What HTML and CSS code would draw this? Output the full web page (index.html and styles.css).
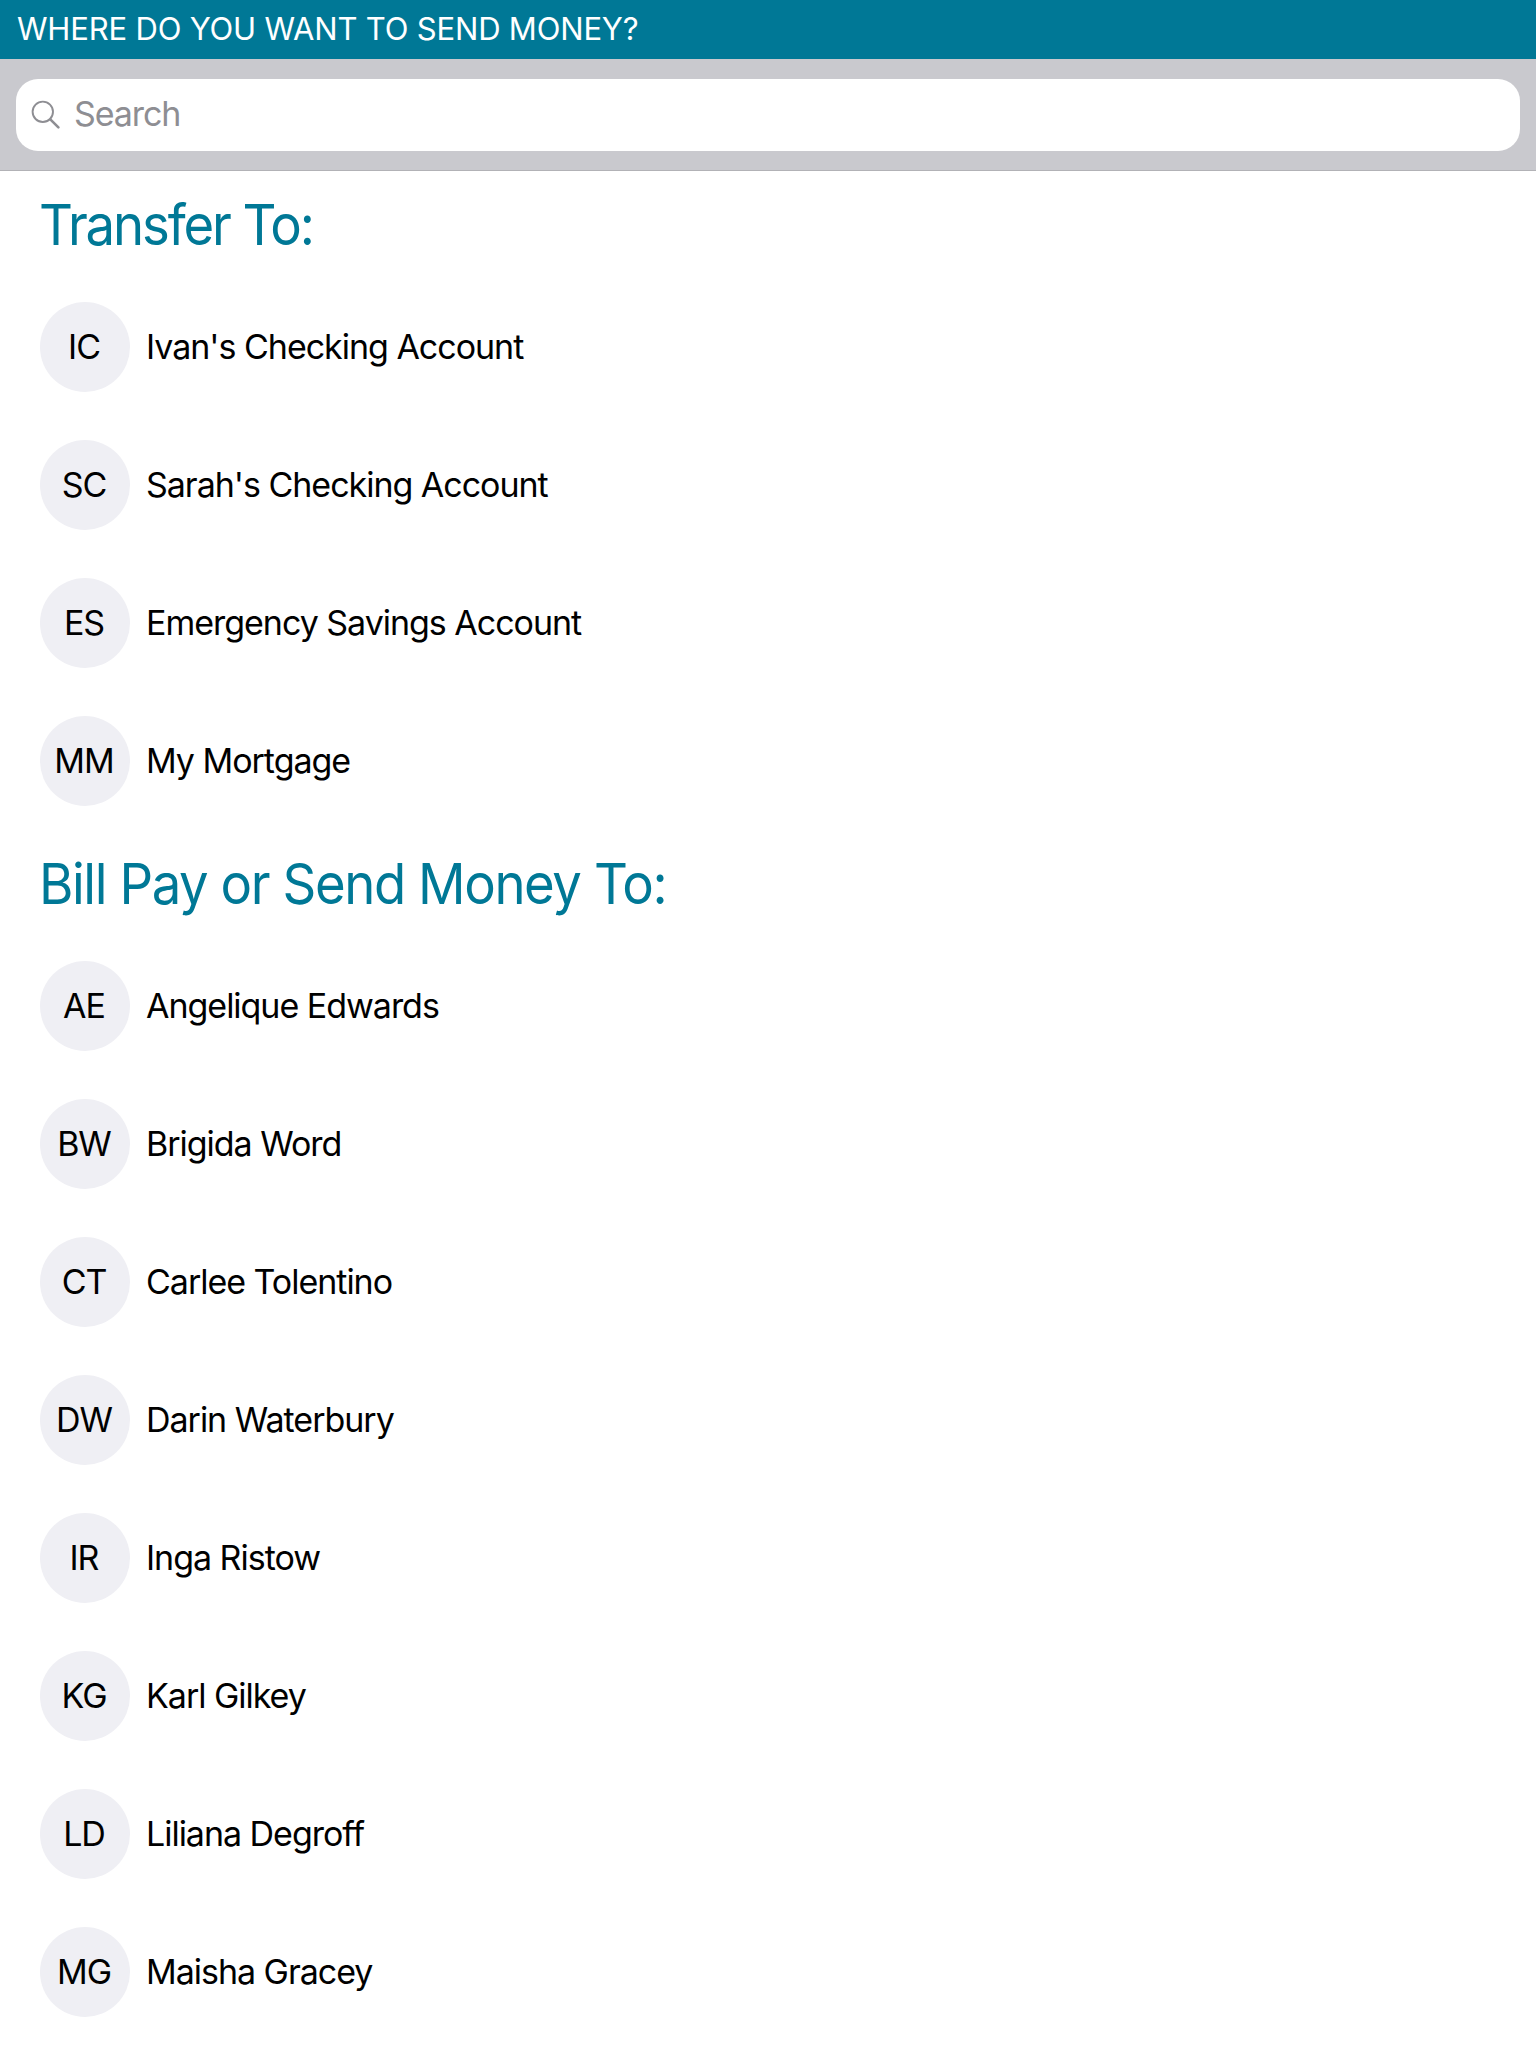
FILE: index.html
```html
<!DOCTYPE html>
<html lang="en">
<head>
<meta charset="utf-8">
<title>Send Money</title>
<link rel="stylesheet" href="styles.css">
</head>
<body>
<header class="title-bar">WHERE DO YOU WANT TO SEND MONEY?</header>
<div class="search-bar">
  <label class="search-field">
    <svg class="search-icon" viewBox="0 0 30 30" fill="none" stroke="#8e8e93"><circle cx="11.8" cy="11.8" r="10.2" stroke-width="1.9"/><path d="M19.3 19.3L27.4 27.4" stroke-width="2.6" stroke-linecap="round"/></svg>
    <span class="placeholder">Search</span>
  </label>
</div>
<main>
  <section>
    <h2 class="heading heading-transfer">Transfer To:</h2>
    <ul class="list">
      <li class="row"><span class="avatar">IC</span><span class="name">Ivan's Checking Account</span></li>
      <li class="row"><span class="avatar">SC</span><span class="name">Sarah's Checking Account</span></li>
      <li class="row"><span class="avatar">ES</span><span class="name">Emergency Savings Account</span></li>
      <li class="row"><span class="avatar">MM</span><span class="name">My Mortgage</span></li>
    </ul>
  </section>
  <section>
    <h2 class="heading">Bill Pay or Send Money To:</h2>
    <ul class="list">
      <li class="row"><span class="avatar">AE</span><span class="name">Angelique Edwards</span></li>
      <li class="row"><span class="avatar">BW</span><span class="name">Brigida Word</span></li>
      <li class="row"><span class="avatar">CT</span><span class="name">Carlee Tolentino</span></li>
      <li class="row"><span class="avatar">DW</span><span class="name">Darin Waterbury</span></li>
      <li class="row"><span class="avatar">IR</span><span class="name">Inga Ristow</span></li>
      <li class="row"><span class="avatar">KG</span><span class="name">Karl Gilkey</span></li>
      <li class="row"><span class="avatar">LD</span><span class="name">Liliana Degroff</span></li>
      <li class="row"><span class="avatar">MG</span><span class="name">Maisha Gracey</span></li>
    </ul>
  </section>
</main>
</body>
</html>
```
FILE: styles.css
```css
* { box-sizing: border-box; }
body {
  margin: 0;
  height: 2048px;
  overflow: hidden;
  background: #fff;
  color: #000;
  font-family: Inter, sans-serif;
  font-size: 34px;
  letter-spacing: -1.02px;
}
.title-bar {
  height: 59px;
  padding-left: 17px;
  background: #007896;
  color: #fff;
  font-size: 31px;
  line-height: 58px;
  letter-spacing: -0.18px;
}
.search-bar {
  height: 112px;
  padding: 20px 16px;
  background: #c9c9ce;
  border-bottom: 1px solid #b2b2b6;
}
.search-field {
  display: flex;
  align-items: center;
  gap: 13px;
  height: 72px;
  padding-left: 15px;
  border-radius: 22px;
  background: #fff;
  color: #8e8e93;
}
.search-icon { width: 30px; height: 30px; margin-bottom: 1px; }
.placeholder { margin-bottom: 4px; letter-spacing: -1.1px; }
.heading {
  height: 107px;
  margin: 0;
  padding: 1px 0 0 39px;
  color: #007896;
  font-size: 56px;
  font-weight: 400;
  line-height: 107px;
  letter-spacing: -1.5px;
  transform: scaleX(0.94);
  transform-origin: 39px 50%;
}
.heading-transfer { letter-spacing: -2.25px; }
.list { margin: 0; padding: 0; list-style: none; }
.row {
  display: flex;
  align-items: center;
  gap: 16px;
  height: 138px;
  padding-left: 40px;
}
.name { margin-bottom: 1px; }
.avatar {
  display: flex;
  align-items: center;
  justify-content: center;
  width: 90px;
  height: 90px;
  padding: 0 2px 1px 0;
  border-radius: 50%;
  background: #efeff4;
}
```
